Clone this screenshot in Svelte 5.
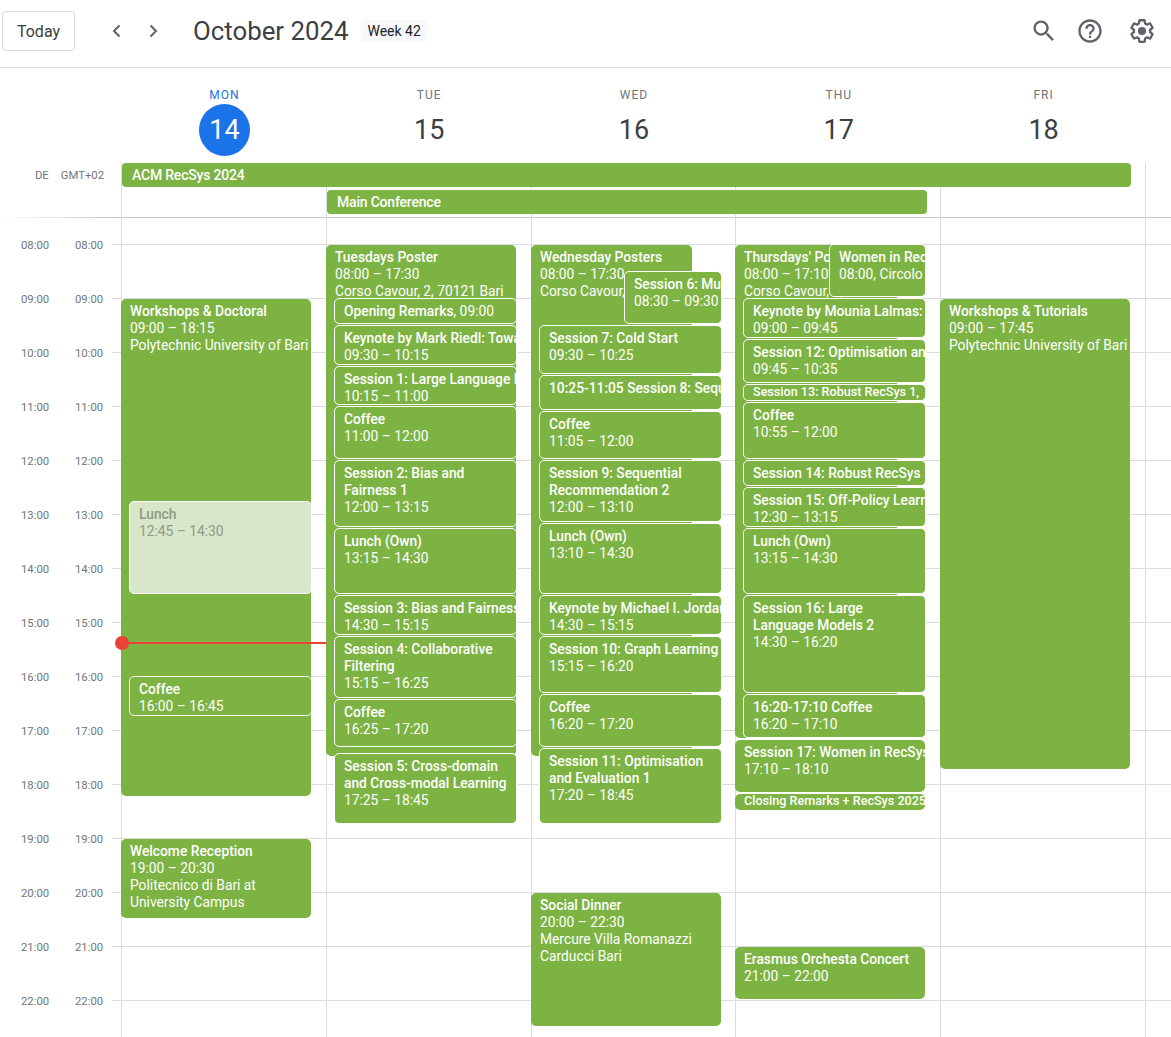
<script>
    const hours = ["08:00","09:00","10:00","11:00","12:00","13:00","14:00","15:00","16:00","17:00","18:00","19:00","20:00","21:00","22:00"];

    const days = [
        { name: "MON", date: 14, current: true },
        { name: "TUE", date: 15 },
        { name: "WED", date: 16 },
        { name: "THU", date: 17 },
        { name: "FRI", date: 18 }
    ];

    // from/to are "hh:mm", left/right are insets inside the day column
    const events = [
        [
            { from: "09:00", to: "18:15", title: "Workshops & Doctoral", lines: ["09:00 – 18:15", "Polytechnic University of Bari"], plain: true },
            { from: "12:45", to: "14:30", title: "Lunch", lines: ["12:45 – 14:30"], left: 7, faded: true },
            { from: "16:00", to: "16:45", title: "Coffee", lines: ["16:00 – 16:45"], left: 7 },
            { from: "19:00", to: "20:30", title: "Welcome Reception", lines: ["19:00 – 20:30", "Politecnico di Bari at University Campus"], plain: true }
        ],
        [
            { from: "08:00", to: "17:30", title: "Tuesdays Poster", lines: ["08:00 – 17:30", "Corso Cavour, 2, 70121 Bari"], plain: true },
            { from: "09:00", to: "09:30", title: "Opening Remarks", inline: "09:00", left: 7 },
            { from: "09:30", to: "10:15", title: "Keynote by Mark Riedl: Towards", lines: ["09:30 – 10:15"], left: 7, clip: true },
            { from: "10:15", to: "11:00", title: "Session 1: Large Language Models 1", lines: ["10:15 – 11:00"], left: 7, clip: true },
            { from: "11:00", to: "12:00", title: "Coffee", lines: ["11:00 – 12:00"], left: 7 },
            { from: "12:00", to: "13:15", title: "Session 2: Bias and Fairness 1", lines: ["12:00 – 13:15"], left: 7 },
            { from: "13:15", to: "14:30", title: "Lunch (Own)", lines: ["13:15 – 14:30"], left: 7 },
            { from: "14:30", to: "15:15", title: "Session 3: Bias and Fairness 2", lines: ["14:30 – 15:15"], left: 7, clip: true },
            { from: "15:15", to: "16:25", title: "Session 4: Collaborative Filtering", lines: ["15:15 – 16:25"], left: 7 },
            { from: "16:25", to: "17:20", title: "Coffee", lines: ["16:25 – 17:20"], left: 7 },
            { from: "17:25", to: "18:45", title: "Session 5: Cross-domain and Cross-modal Learning", lines: ["17:25 – 18:45"], left: 7 }
        ],
        [
            { from: "08:00", to: "17:30", title: "Wednesday Posters", lines: ["08:00 – 17:30", "Corso Cavour, 2, 70121 Bari"], right: 43, plain: true, clip: true },
            { from: "08:30", to: "09:30", title: "Session 6: Music", lines: ["08:30 – 09:30"], left: 92, right: 13, clip: true },
            { from: "09:30", to: "10:25", title: "Session 7: Cold Start", lines: ["09:30 – 10:25"], left: 7, right: 13 },
            { from: "10:25", to: "11:05", title: "10:25-11:05 Session 8: Sequential", lines: [], left: 7, right: 13, clip: true },
            { from: "11:05", to: "12:00", title: "Coffee", lines: ["11:05 – 12:00"], left: 7, right: 13 },
            { from: "12:00", to: "13:10", title: "Session 9: Sequential Recommendation 2", lines: ["12:00 – 13:10"], left: 7, right: 13 },
            { from: "13:10", to: "14:30", title: "Lunch (Own)", lines: ["13:10 – 14:30"], left: 7, right: 13 },
            { from: "14:30", to: "15:15", title: "Keynote by Michael I. Jordan", lines: ["14:30 – 15:15"], left: 7, right: 13, clip: true },
            { from: "15:15", to: "16:20", title: "Session 10: Graph Learning", lines: ["15:15 – 16:20"], left: 7, right: 13, clip: true },
            { from: "16:20", to: "17:20", title: "Coffee", lines: ["16:20 – 17:20"], left: 7, right: 13 },
            { from: "17:20", to: "18:45", title: "Session 11: Optimisation and Evaluation 1", lines: ["17:20 – 18:45"], left: 7, right: 13 },
            { from: "20:00", to: "22:30", title: "Social Dinner", lines: ["20:00 – 22:30", "Mercure Villa Romanazzi Carducci Bari"], right: 14, plain: true }
        ],
        [
            { from: "08:00", to: "17:10", title: "Thursdays' Posters", lines: ["08:00 – 17:10", "Corso Cavour, 2, 70121 Bari"], right: 43, plain: true, clip: true },
            { from: "08:00", to: "09:00", title: "Women in RecSys", lines: ["08:00, Circolo Unione"], left: 93, clip: true },
            { from: "09:00", to: "09:45", title: "Keynote by Mounia Lalmas:", lines: ["09:00 – 09:45"], left: 7, clip: true },
            { from: "09:45", to: "10:35", title: "Session 12: Optimisation and", lines: ["09:45 – 10:35"], left: 7, clip: true },
            { from: "10:35", to: "10:55", title: "Session 13: Robust RecSys 1,", lines: [], left: 7, clip: true, small: true },
            { from: "10:55", to: "12:00", title: "Coffee", lines: ["10:55 – 12:00"], left: 7 },
            { from: "12:00", to: "12:30", title: "Session 14: Robust RecSys 2", lines: [], left: 7, clip: true },
            { from: "12:30", to: "13:15", title: "Session 15: Off-Policy Learning", lines: ["12:30 – 13:15"], left: 7, clip: true },
            { from: "13:15", to: "14:30", title: "Lunch (Own)", lines: ["13:15 – 14:30"], left: 7 },
            { from: "14:30", to: "16:20", title: "Session 16: Large Language Models 2", lines: ["14:30 – 16:20"], left: 7 },
            { from: "16:20", to: "17:10", title: "16:20-17:10 Coffee", lines: ["16:20 – 17:10"], left: 7 },
            { from: "17:10", to: "18:10", title: "Session 17: Women in RecSys", lines: ["17:10 – 18:10"], plain: true, clip: true },
            { from: "18:10", to: "18:30", title: "Closing Remarks + RecSys 2025", lines: [], clip: true, small: true, plain: true },
            { from: "21:00", to: "22:00", title: "Erasmus Orchesta Concert", lines: ["21:00 – 22:00"], plain: true, clip: true }
        ],
        [
            { from: "09:00", to: "17:45", title: "Workshops & Tutorials", lines: ["09:00 – 17:45", "Polytechnic University of Bari"], plain: true }
        ]
    ];

    const hourPx = 54;
    const gridStart = 27;

    function minutes(t) {
        const [h, m] = t.split(":").map(Number);
        return h * 60 + m - 480;
    }

    function place(ev) {
        const top = gridStart + (minutes(ev.from) * hourPx) / 60;
        const height = ((minutes(ev.to) - minutes(ev.from)) * hourPx) / 60;
        const shift = ev.plain ? 0 : -1;
        const trim = ev.plain ? 2.5 : 1;
        return `top:${top + shift}px;height:${height - trim}px;left:${ev.left ?? 0}px;right:${ev.right ?? (ev.plain ? 15 : 14)}px`;
    }
</script>

<div class="page">
    <header class="topbar">
        <button class="today">Today</button>
        <div class="arrows">
            <svg viewBox="0 0 24 24" width="24" height="24"><path d="M14.5 6.5 9 12l5.5 5.5" /></svg>
            <svg viewBox="0 0 24 24" width="24" height="24"><path d="M9.5 6.5 15 12l-5.5 5.5" /></svg>
        </div>
        <h1>October 2024</h1>
        <span class="week">Week 42</span>
        <div class="tools">
            <svg class="search" viewBox="0 0 24 24" width="28" height="28"><path d="M15.5 14h-.79l-.28-.27C15.41 12.59 16 11.11 16 9.5 16 5.91 13.09 3 9.5 3S3 5.91 3 9.5 5.91 16 9.5 16c1.61 0 3.09-.59 4.23-1.57l.27.28v.79l5 4.99L20.49 19l-4.99-5zm-6 0C7.01 14 5 11.99 5 9.5S7.01 5 9.5 5 14 7.01 14 9.5 11.99 14 9.5 14z" /></svg>
            <svg viewBox="0 0 24 24" width="28" height="28"><path d="M11 18h2v-2h-2v2zm1-16C6.48 2 2 6.48 2 12s4.48 10 10 10 10-4.48 10-10S17.52 2 12 2zm0 18c-4.41 0-8-3.59-8-8s3.59-8 8-8 8 3.59 8 8-3.59 8-8 8zm0-14c-2.21 0-4 1.79-4 4h2c0-1.1.9-2 2-2s2 .9 2 2c0 2-3 1.75-3 5h2c0-2.25 3-2.5 3-5 0-2.21-1.79-4-4-4z" /></svg>
            <svg viewBox="0 0 24 24" width="28" height="28"><path d="M13.85 22.25h-3.7c-.74 0-1.36-.54-1.45-1.27l-.27-1.89c-.27-.14-.53-.29-.79-.46l-1.8.72c-.7.26-1.47-.03-1.81-.65L2.2 15.53c-.35-.66-.2-1.44.36-1.88l1.53-1.19c-.01-.15-.02-.3-.02-.46 0-.15.01-.31.02-.46l-1.52-1.19c-.59-.45-.74-1.26-.37-1.88l1.85-3.19c.34-.62 1.11-.9 1.79-.63l1.81.73c.26-.17.52-.32.78-.46l.27-1.91c.09-.7.71-1.25 1.44-1.25h3.7c.74 0 1.36.54 1.45 1.27l.27 1.89c.27.14.53.29.79.46l1.8-.72c.71-.26 1.48.03 1.82.65l1.84 3.18c.36.66.2 1.44-.36 1.88l-1.52 1.19c.01.15.02.3.02.46s-.01.31-.02.46l1.52 1.19c.56.45.72 1.23.37 1.86l-1.86 3.22c-.34.62-1.11.9-1.8.63l-1.8-.72c-.26.17-.52.32-.78.46l-.27 1.91c-.1.68-.72 1.22-1.46 1.22zm-3.23-2h2.76l.37-2.55.53-.22c.44-.18.88-.44 1.34-.78l.45-.34 2.38.96 1.38-2.4-2.03-1.58.07-.56c.03-.26.06-.51.06-.78s-.03-.53-.06-.78l-.07-.56 2.03-1.58-1.39-2.4-2.39.96-.45-.35c-.42-.32-.87-.58-1.33-.77l-.52-.22-.37-2.55h-2.76l-.37 2.55-.53.21c-.44.19-.88.44-1.34.79l-.45.33-2.38-.95-1.39 2.39 2.03 1.58-.07.56a7 7 0 0 0-.06.79c0 .26.02.53.06.78l.07.56-2.03 1.58 1.38 2.4 2.39-.96.45.35c.43.33.86.58 1.33.77l.53.22.38 2.55z" /><circle cx="12" cy="12" r="3.5" /></svg>
        </div>
    </header>

    <div class="dayhead">
        {#each days as d}
            <div class="day" class:current={d.current}>
                <div class="dayname">{d.name}</div>
                <div class="daynum">{d.date}</div>
            </div>
        {/each}
    </div>

    <div class="allday">
        <div class="zones"><span>DE</span><span>GMT+02</span></div>
        <div class="banner acm">ACM RecSys 2024</div>
        <div class="banner main">Main Conference</div>
        {#each [2, 3, 4, 5, 6, 7] as n}
            <i class="vline" style="grid-column:{n}"></i>
        {/each}
    </div>

    <div class="body">
        {#each hours as h, i}
            <div class="row" class:first={i === 0}>
                <span>{h}</span><span>{h}</span>
            </div>
        {/each}

        <div class="cols">
            {#each events as col, c}
                <div class="col">
                    {#each col as ev}
                        <div class="ev" class:plain={ev.plain} class:faded={ev.faded} class:clip={ev.clip} class:small={ev.small} style={place(ev)}>
                            <div class="title">{ev.title}{#if ev.inline}<span class="inl">, {ev.inline}</span>{/if}</div>
                            {#each ev.lines ?? [] as line}
                                <div class="line">{line}</div>
                            {/each}
                        </div>
                    {/each}
                    {#if c === 0}
                        <div class="now"></div>
                    {/if}
                </div>
            {/each}
            <div class="col"></div>
        </div>
    </div>
</div>

<style>
    :global(body) {
        margin: 0;
        background: #fff;
    }
    .page {
        width: 1171px;
        height: 1037px;
        overflow: hidden;
        font-family: Roboto, "Liberation Sans", sans-serif;
        color: #3c4043;
    }
    .topbar {
        height: 61px;
        border-bottom: 1px solid #dadce0;
        display: flex;
        align-items: center;
        padding: 0 0 6px 2px;
    }
    .today {
        width: 73px;
        height: 40px;
        border: 1px solid #dadce0;
        border-radius: 4px;
        background: #fff;
        font: 400 16px Roboto, sans-serif;
        color: #3c4043;
        padding: 1px 0 0;
    }
    .arrows {
        display: flex;
        gap: 12px;
        margin-left: 30px;
    }
    .arrows path {
        fill: none;
        stroke: #5f6368;
        stroke-width: 2;
    }
    h1 {
        margin: 0 0 0 28px;
        font-size: 25.8px;
        font-weight: 400;
        color: #3c4043;
    }
    .week {
        margin-left: 13px;
        padding: 3px 6px;
        background: #f8f9fa;
        border-radius: 4px;
        font-size: 14px;
        line-height: 16px;
        color: #202124;
    }
    .tools {
        margin-left: auto;
        margin-right: 15px;
        display: flex;
        gap: 24px;
    }
    .tools svg {
        fill: #5f6368;
    }
    .tools .search {
        margin-right: -6px;
    }
    .dayhead {
        display: grid;
        grid-template-columns: repeat(5, 204.8px);
        padding-left: 122px;
        height: 95px;
    }
    .day {
        text-align: center;
        padding-top: 21px;
    }
    .dayname {
        font-size: 12px;
        line-height: 13px;
        letter-spacing: 1px;
        color: #70757a;
    }
    .daynum {
        width: 51px;
        height: 52px;
        margin: 2px auto 0;
        border-radius: 50%;
        font-size: 27px;
        line-height: 52px;
        color: #3c4043;
    }
    .current .dayname {
        color: #1a73e8;
    }
    .current .daynum {
        background: #1a73e8;
        color: #fff;
    }
    .allday {
        position: relative;
        display: grid;
        grid-template-columns: 121px 205px 205px 204px 205px 205px 1fr;
        grid-template-rows: 24px 24px;
        row-gap: 3px;
        height: 55px;
        background: linear-gradient(to right, rgba(190, 192, 197, 0), #c4c6ca 110px) 0 100% / 100% 1px no-repeat;
    }
    .zones {
        grid-column: 1;
        grid-row: 1;
        display: flex;
        justify-content: flex-end;
        gap: 12px;
        padding-right: 17px;
        font-size: 11.3px;
        line-height: 26px;
        color: #70757a;
    }
    .vline {
        grid-row: 1 / 3;
        border-left: 1px solid #dadce0;
        margin-bottom: -4px;
    }
    .banner {
        position: relative;
        z-index: 1;
        background: #7cb342;
        color: #fff;
        border-radius: 4px;
        font-size: 14px;
        letter-spacing: -0.2px;
        font-weight: 500;
        line-height: 24px;
        padding-left: 10px;
    }
    .acm {
        grid-column: 2 / 7;
        grid-row: 1;
        margin: 0 14px 0 1px;
    }
    .main {
        grid-column: 3 / 6;
        grid-row: 2;
        margin: 0 13px 0 1px;
    }
    .body {
        position: relative;
        height: 819px;
        overflow: hidden;
        padding-top: 0.01px;
    }
    .row {
        height: 54px;
        box-sizing: border-box;
        padding-left: 21px;
        display: flex;
        gap: 26px;
        background: linear-gradient(#dadce0, #dadce0) 112px 0 / 100% 1px no-repeat;
    }
    .row.first {
        margin-top: 26px;
    }
    .row span {
        width: 28px;
        height: 16px;
        margin-top: -6px;
        font-size: 11.3px;
        line-height: 16px;
        color: #70757a;
    }
    .cols {
        position: absolute;
        inset: 0 0 0 121px;
        display: grid;
        grid-template-columns: 205px 205px 204px 205px 205px 1fr;
    }
    .col {
        position: relative;
        border-left: 1px solid #dadce0;
    }
    .ev {
        position: absolute;
        box-sizing: border-box;
        overflow: hidden;
        background: #7cb342;
        color: #fff;
        border: 1px solid #fff;
        border-radius: 5px;
        padding: 4px 6px 3px 9px;
        font-size: 13.8px;
        line-height: 17px;
    }
    .ev.plain {
        border: none;
        padding: 4px 2px 4px 9px;
        margin-left: -1px;
    }
    .ev.faded {
        background: #d8e6c9;
        color: #8d9a84;
    }
    .title {
        font-weight: 500;
    }
    .inl {
        font-weight: 400;
    }
    .clip .title, .clip .line {
        white-space: nowrap;
    }
    .ev.small {
        font-size: 12.6px;
        line-height: 13px;
        padding-top: 0;
        padding-bottom: 0;
    }
    .now {
        position: absolute;
        top: 424px;
        left: 0;
        right: 0;
        height: 2px;
        background: #ea4335;
        z-index: 5;
    }
    .now::before {
        content: "";
        position: absolute;
        left: -7px;
        top: -6px;
        width: 14px;
        height: 14px;
        border-radius: 50%;
        background: #ea4335;
    }
</style>
